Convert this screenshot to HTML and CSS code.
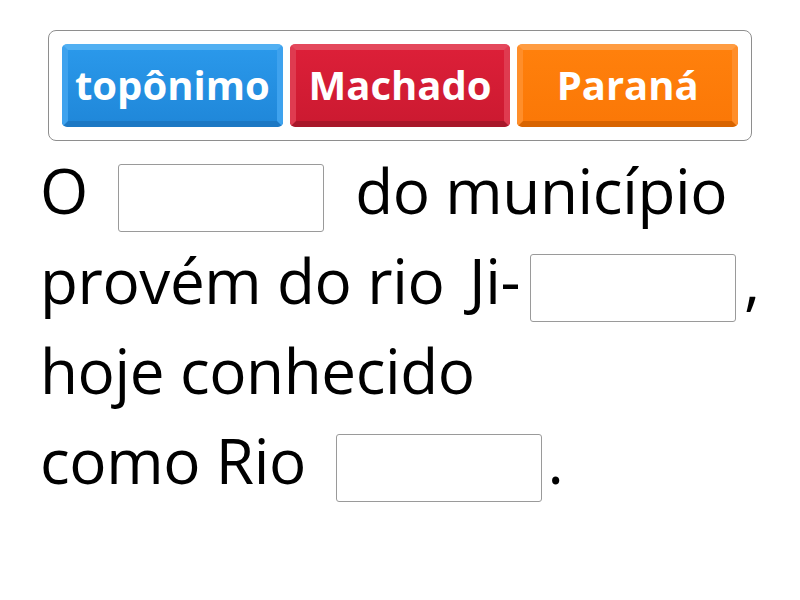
FILE: index.html
```html
<!DOCTYPE html>
<html lang="pt">
<head>
<meta charset="utf-8">
<link rel="stylesheet" href="styles.css">
</head>
<body>
<div class="panel">
  <div class="tile tile-blue">topônimo</div>
  <div class="tile tile-red">Machado</div>
  <div class="tile tile-orange">Paraná</div>
</div>
<div class="text">
  <div class="line">O <span class="blank"></span> do município</div>
  <div class="line">provém do rio <span class="ji">Ji-</span><span class="blank blank-tight"></span>,</div>
  <div class="line">hoje conhecido</div>
  <div class="line">como Rio <span class="blank blank-end"></span>.</div>
</div>
</body>
</html>
```
FILE: styles.css
```css
html, body {
  margin: 0;
  padding: 0;
  background: #ffffff;
}
body {
  font-family: "Open Sans", "Noto Sans", sans-serif;
  color: #000;
}
.panel {
  margin: 30px 48px 0 48px;
  height: 111px;
  box-sizing: border-box;
  border: 1.5px solid #8e8e8e;
  border-radius: 8px;
  padding: 13px 13px;
  display: flex;
  gap: 7px;
}
.tile {
  flex: 1;
  box-sizing: border-box;
  border-radius: 5px;
  border: 6px solid;
  display: flex;
  align-items: center;
  justify-content: center;
  color: #fff;
  font-weight: 700;
  font-size: 40px;
  line-height: 1;
  padding-bottom: 2px;
}
.tile-blue {
  background: linear-gradient(#2a98ea, #2088da);
  border-color: #52b0f2 #3ea2ee #1c78c4 #3ea2ee;
}
.tile-red {
  background: linear-gradient(#dc1f38, #cc1a31);
  border-color: #e4485c #df3b50 #a8172a #df3b50;
}
.tile-orange {
  background: linear-gradient(#ff800c, #fb7807);
  border-color: #ff9c42 #ff8e2a #d86400 #ff8e2a;
}
.text {
  padding-left: 40px;
  padding-top: 4px;
  font-size: 62px;
  letter-spacing: -0.4px;
  line-height: 90px;
}
.line {
  white-space: nowrap;
}
.blank {
  display: inline-block;
  width: 206px;
  height: 68px;
  box-sizing: border-box;
  border: 1.5px solid #9a9a9a;
  border-radius: 3px;
  margin: 0 16px 0 14px;
  vertical-align: -18px;
}
.blank-tight {
  margin: 0 8px 0 10px;
}
.blank-end {
  margin-right: 6px;
}
.ji {
  margin-left: 9px;
}
```
